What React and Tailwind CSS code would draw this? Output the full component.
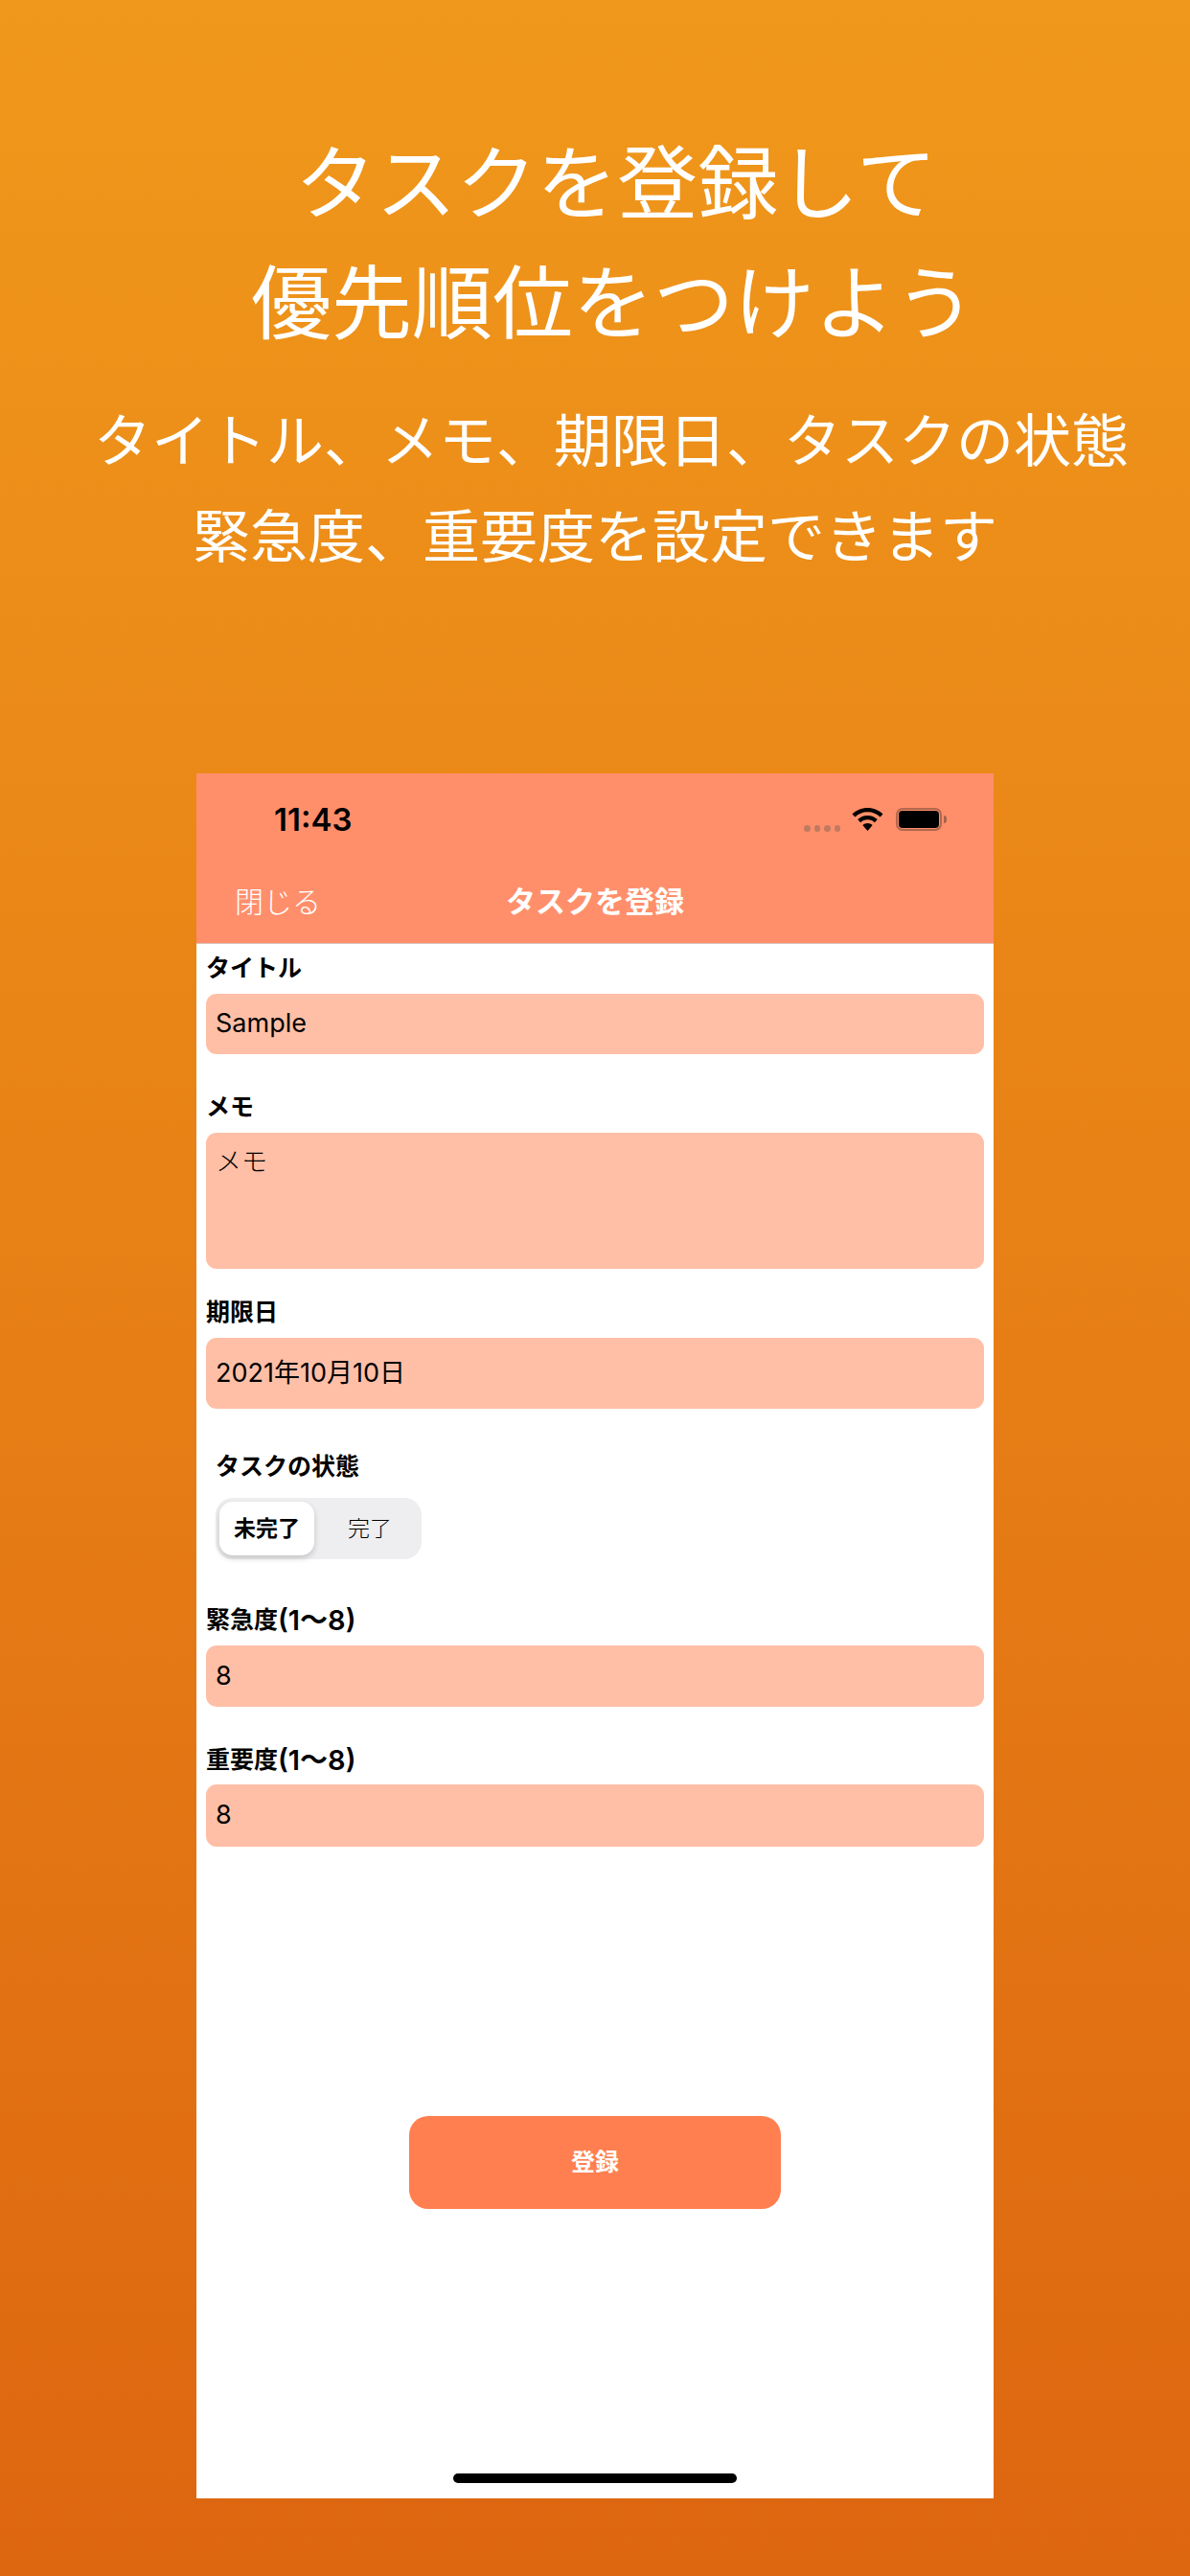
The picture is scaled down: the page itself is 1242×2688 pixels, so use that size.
const cjk = "font-['Inter','Noto_Sans_CJK_JP',sans-serif]";

function Label({ children, className = "" }) {
  return (
    <div className={`h-[34px] flex items-center text-[25px] font-bold text-black ${className}`}>
      {children}
    </div>
  );
}

function InputBox({ children, className = "" }) {
  return (
    <div className={`bg-[#ffbfa7] rounded-[11px] pl-[10px] flex items-center text-[27px] text-black ${className}`}>
      {children}
    </div>
  );
}

function WifiIcon() {
  return (
    <svg width="33" height="24" viewBox="0 0 33 24" className="ml-[12px]">
      <path d="M16.5 0C10.2 0 4.6 2.5 0.5 6.5L3.4 9.6C6.8 6.3 11.4 4.3 16.5 4.3s9.7 2 13.1 5.3l2.9-3.1C28.4 2.5 22.8 0 16.5 0z" fill="#000" />
      <path d="M16.5 8C12.5 8 8.9 9.6 6.2 12.1l2.9 3.1c1.9-1.8 4.5-2.9 7.4-2.9s5.5 1.1 7.4 2.9l2.9-3.1C24.1 9.6 20.5 8 16.5 8z" fill="#000" />
      <path d="M16.5 16c-2 0-3.8 0.8-5.2 2l5.2 6 5.2-6c-1.4-1.2-3.2-2-5.2-2z" fill="#000" />
    </svg>
  );
}

function StatusIcons() {
  return (
    <div className="flex items-center">
      <div className="flex gap-[4px] mt-[18px]">
        <div className="w-[6.5px] h-[6.5px] rounded-full bg-[#c17a60]" />
        <div className="w-[6.5px] h-[6.5px] rounded-full bg-[#c17a60]" />
        <div className="w-[6.5px] h-[6.5px] rounded-full bg-[#c17a60]" />
        <div className="w-[6.5px] h-[6.5px] rounded-full bg-[#c17a60]" />
      </div>
      <WifiIcon />
      <div className="ml-[13px] w-[48px] h-[24px] rounded-[7px] border-2 border-[#b2674d] p-[1px]">
        <div className="w-full h-full rounded-[4px] bg-black" />
      </div>
      <div className="ml-[2px] w-[3px] h-[8px] rounded-r-full bg-[#a9624a]" />
    </div>
  );
}

export default function App() {
  return (
    <div className={`w-[1242px] h-[2688px] overflow-hidden flex flex-col items-center bg-linear-to-b from-[#f0981b] to-[#dd6610] pt-[129px] ${cjk}`}>
      <h1 className="w-full text-[84px] leading-[125px] font-normal text-white text-center">
        <div className="pl-[44px]">タスクを登録して</div>
        <div className="pl-[38px]">優先順位をつけよう</div>
      </h1>
      <div className="w-full mt-[31px] text-[60px] leading-[100px] font-normal text-white text-center">
        <div className="pl-[34px]">タイトル、メモ、期限日、タスクの状態</div>
        <div>緊急度、重要度を設定できます</div>
      </div>

      <div className="mt-[197px] w-[832px] h-[1800px] bg-white flex flex-col">
        <div className="h-[178px] bg-[#ff8f6b] border-b border-[#d8c4bc] flex flex-col">
          <div className="h-[91px] pt-[36px] pl-[81px] pr-[49px] flex justify-between items-start">
            <span className="text-[33px] leading-[24px] font-semibold text-black">11:43</span>
            <StatusIcons />
          </div>
          <div className="relative flex items-center justify-center h-[54px] mt-[16px]">
            <span className="absolute left-[40px] text-[30px] font-light text-white">閉じる</span>
            <span className="text-[31px] font-bold text-white">タスクを登録</span>
          </div>
        </div>

        <div className="flex-1 flex flex-col px-[10px]">
          <Label className="mt-[9px] mb-[9px]">タイトル</Label>
          <InputBox className="h-[63px]">Sample</InputBox>

          <Label className="mt-[39px] mb-[9px]">メモ</Label>
          <InputBox className="h-[142px] !items-start pt-[11px] font-light">メモ</InputBox>

          <Label className="mt-[29px] mb-[9px]">期限日</Label>
          <InputBox className="h-[74px]">2021年10月10日</InputBox>

          <Label className="mt-[44px] mb-[15px] pl-[10px]">タスクの状態</Label>
          <div className="ml-[10px] w-[215px] h-[64px] rounded-[18px] bg-[#eeeef0] p-[4px] flex items-center">
            <div className="w-[99px] h-[56px] rounded-[14px] bg-white shadow-[0_3px_6px_rgba(0,0,0,0.18)] flex items-center justify-center text-[23px] font-bold text-black">
              未完了
            </div>
            <div className="flex-1 flex items-center justify-center pl-[8px] text-[23px] font-light text-black">完了</div>
          </div>

          <Label className="mt-[47px] mb-[9px]">
            緊急度<span className="text-[29px] font-semibold">(1〜8)</span>
          </Label>
          <InputBox className="h-[64px]">8</InputBox>

          <Label className="mt-[39px] mb-[8px]">
            重要度<span className="text-[29px] font-semibold">(1〜8)</span>
          </Label>
          <InputBox className="h-[65px]">8</InputBox>

          <div className="mt-[281px] self-center w-[388px] h-[97px] rounded-[20px] bg-[#ff7f50] flex items-center justify-center text-[25px] font-semibold text-white">
            登録
          </div>

          <div className="mt-[276px] self-center w-[296px] h-[10px] rounded-full bg-black" />
        </div>
      </div>
    </div>
  );
}
